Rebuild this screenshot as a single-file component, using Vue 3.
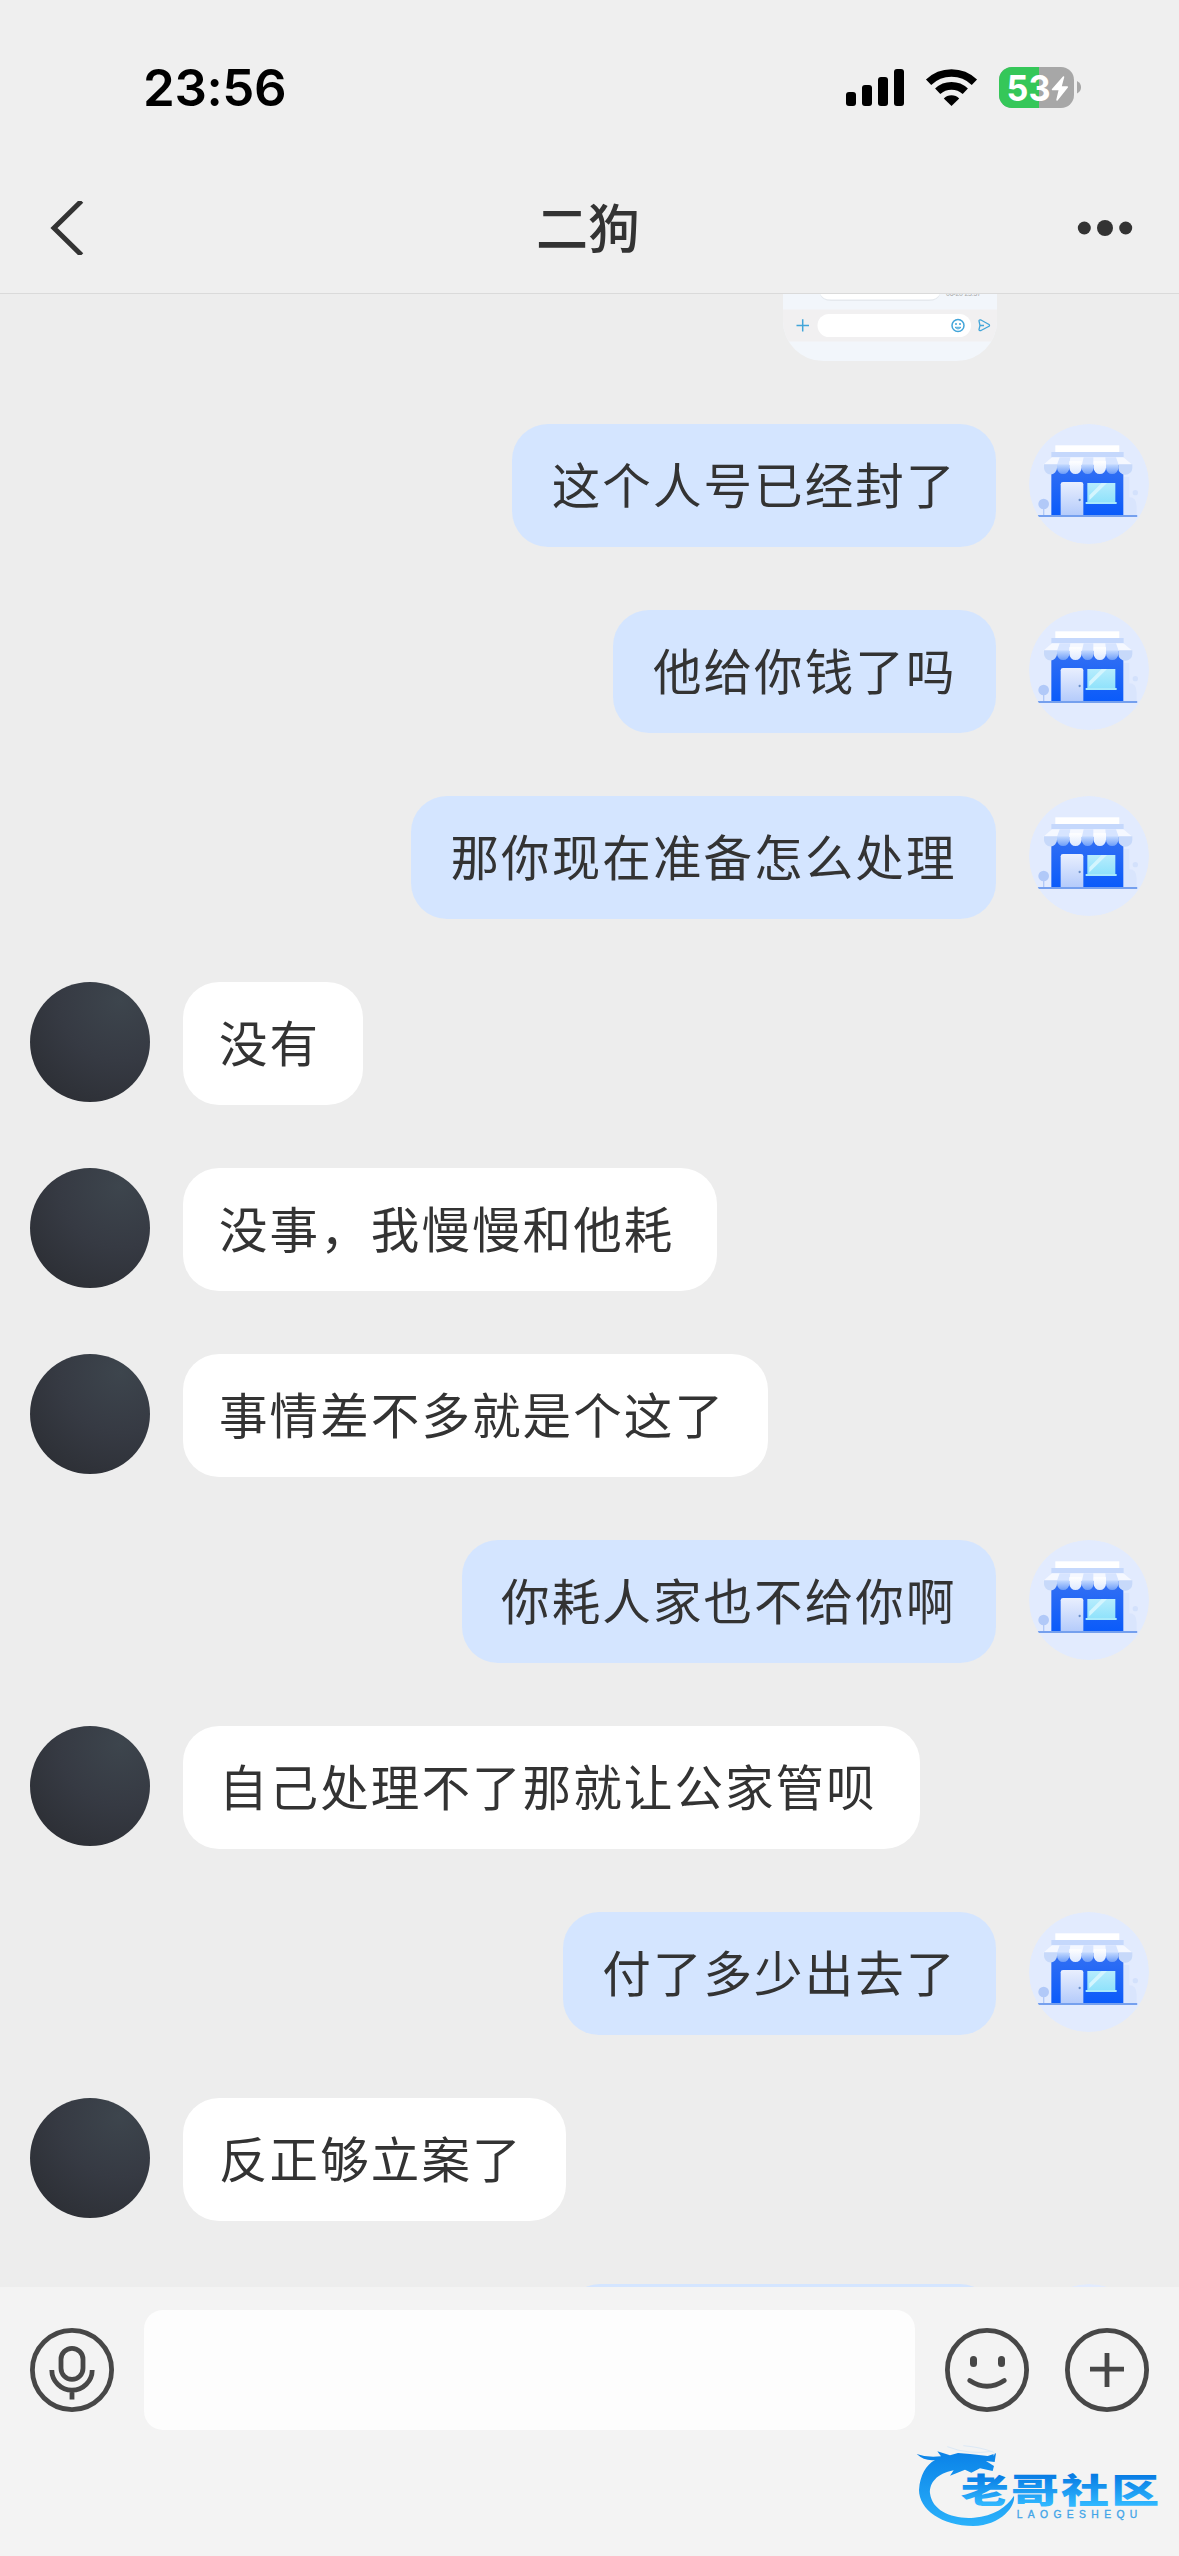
<script setup>
const messages = [
  { me: true, text: '这个人号已经封了' },
  { me: true, text: '他给你钱了吗' },
  { me: true, text: '那你现在准备怎么处理' },
  { me: false, text: '没有' },
  { me: false, text: '没事，我慢慢和他耗' },
  { me: false, text: '事情差不多就是个这了' },
  { me: true, text: '你耗人家也不给你啊' },
  { me: false, text: '自己处理不了那就让公家管呗' },
  { me: true, text: '付了多少出去了' },
  { me: false, text: '反正够立案了' },
  { me: true, text: '', partial: true },
]
</script>

<template>
  <div class="screen">
    <header class="top">
      <div class="status">
        <span class="time">23:56</span>
        <svg class="indicators" width="240" height="44" viewBox="844 66 240 44">
          <rect x="846" y="92" width="10" height="14" rx="3" />
          <rect x="862" y="85" width="10" height="21" rx="3" />
          <rect x="878" y="77" width="10" height="29" rx="3" />
          <rect x="894" y="69" width="10" height="37" rx="3" />
          <g fill="none" stroke="#000" stroke-width="7.6">
            <path d="M928.6 82.2 A33 33 0 0 1 974.4 82.2" />
            <path d="M937.7 91.3 A20.2 20.2 0 0 1 965.3 91.3" />
          </g>
          <path d="M951.5 106 L943.8 98.5 A11 11 0 0 1 959.2 98.5 Z" />
          <rect x="999" y="67" width="75" height="41" rx="13" fill="#a7a7a7" />
          <path d="M1039 67 H1012 A13 13 0 0 0 999 80 V95 A13 13 0 0 0 1012 108 H1039 Z" fill="#35c759" />
          <path d="M1077 81 Q1081 83 1081 87.3 Q1081 91.500 1077 93.500 Z" fill="#a7a7a7" />
          <text x="1006.500" y="100.500" class="battery" textLength="44" lengthAdjust="spacingAndGlyphs">53</text>
          <path d="M1063.500 77 L1052.500 89.500 H1059.500 L1057 100 L1067.300 87 H1060.800 Z" fill="#fff" stroke="#fff" stroke-width="1.500" stroke-linejoin="round" />
        </svg>
      </div>
      <nav class="nav">
        <svg class="back" width="34" height="54" viewBox="0 0 34 54"><path d="M31.500 0 L4 27 L31.500 54" /></svg>
        <h1>二狗</h1>
        <svg class="more" width="56" height="18" viewBox="0 0 56 18">
          <circle cx="7.300" cy="9" r="6.500" /><circle cx="28" cy="9" r="8" /><circle cx="48.700" cy="9" r="6.500" />
        </svg>
      </nav>
    </header>

    <main class="chat">
      <div class="thumb">
        <svg width="214" height="67" viewBox="0 0 214 67">
          <rect width="214" height="67" fill="#f2f6fb" />
          <rect y="15.500" width="214" height="32" fill="#f1f0f1" />
          <path d="M36 -10 H158 V-6 Q158 7 146 7 H48 Q36 7 36 -6Z" fill="#e5e9ee" />
          <path d="M36 -10 H158 V-6 Q158 5.500 146 5.500 H48 Q36 5.500 36 -6Z" fill="#fff" />
          <text x="163" y="2" class="stamp" textLength="35">06-20 23:57</text>
          <rect x="34.500" y="20" width="153.500" height="23" rx="11.500" fill="#fff" />
          <g fill="none" stroke="#42a5d9" stroke-width="1.500">
            <path d="M13.500 31.500 H26 M19.700 25.300 V37.500" />
            <circle cx="175" cy="31.500" r="6" />
            <path d="M172 33.300 Q175 36.500 178 33.300 Z" stroke-width="1" />
            <path d="M173 29 V31 M177 29 V31" />
            <path d="M196 27 Q196 25.500 198 26 L206 30.500 Q207 31.500 206 32.300 L198 36.500 Q196 37 196 35.500 L197 31.500 Z M197 31.500 H201" stroke-width="1.300" />
          </g>
        </svg>
      </div>

      <div v-for="(m, i) in messages" :key="i" class="row" :class="{ me: m.me }">
        <svg v-if="m.me" class="avatar" viewBox="29 42 360 360">
          <defs>
            <linearGradient id="wall" x2="0" y2="1"><stop stop-color="#3470f3" /><stop offset="1" stop-color="#0a5bfa" /></linearGradient>
            <linearGradient id="door" x2="0" y2="1"><stop stop-color="#e9effe" /><stop offset="1" stop-color="#b4cbfb" /></linearGradient>
            <linearGradient id="glass" x2="0" y2="1"><stop stop-color="#b6ecfd" /><stop offset="1" stop-color="#8fe2fb" /></linearGradient>
            <linearGradient id="scallop" x2="0" y2="1"><stop stop-color="#c4daff" /><stop offset="1" stop-color="#6d9df8" /></linearGradient>
            <linearGradient id="pale" x2="0" y2="1"><stop stop-color="#fff" /><stop offset="1" stop-color="#dce8fe" /></linearGradient>
          </defs>
          <circle cx="209" cy="222" r="180" fill="#e2ebfe" />
          <path d="M313 315 V200 H330 V262 Q352 262 352 290 V315 Z" fill="#d9e5fd" />
          <circle cx="348" cy="248" r="8" fill="#d3e1fc" />
          <path d="M96 165 H312 V316 H96 Z" fill="url(#wall)" />
          <rect x="108" y="106" width="192" height="20" fill="#fff" />
          <rect x="96" y="126" width="217" height="16" fill="#c5d8fc" />
          <path d="M98 142 H312 L339 164 H72 Z" fill="#f5f8ff" />
          <path d="M121 142 H153 L150 164 H113Z M193 142 H222 V164 H188Z M258 142 H290 L298 164 H260Z" fill="#d6e4ff" />
          <path d="M74 163 H113 V174 A19 19 0 0 1 74 174Z M297 163 H339 V174 A20 19 0 0 1 297 174Z" fill="#c7d9fa" />
          <path d="M113 163 H150 V173 A18.500 19 0 0 1 113 173Z M187 163 H223 V173 A18 19 0 0 1 187 173Z M260 163 H297 V173 A18.500 19 0 0 1 260 173Z" fill="url(#scallop)" />
          <path d="M150 154 H187 V173 A18.500 19 0 0 1 150 173Z M223 154 H260 V173 A18.500 19 0 0 1 223 173Z" fill="url(#pale)" />
          <path d="M124 316 V223 Q124 216 131 216 H185 Q192 216 192 223 V316 Z" fill="url(#door)" />
          <circle cx="181" cy="270" r="3.500" fill="#6c90c9" />
          <rect x="204" y="219" width="84" height="59" fill="url(#glass)" />
          <path d="M210 256 L247 219 H263 L210 271Z" fill="#d3f5fe" />
          <rect x="199" y="276" width="93" height="6" fill="#a9eafb" />
          <circle cx="73" cy="282" r="16" fill="#b1c9f8" />
          <path d="M71 290 H75 V316 H71Z" fill="#b1c9f8" />
          <rect x="54" y="315" width="300" height="6" rx="2" fill="#75a0ee" />
        </svg>
        <div v-else class="avatar dark"></div>
        <div class="bubble" :class="{ partial: m.partial }">{{ m.text }}</div>
      </div>
    </main>

    <footer class="bar">
      <div class="controls">
        <svg class="round" viewBox="-42 -42 84 84">
          <circle r="39.600" /><rect x="-11" y="-21.700" width="22" height="31" rx="11" />
          <path d="M-20.200 0 A20.200 20.200 0 0 0 20.200 0 M0 20 V29.500" />
        </svg>
        <div class="input"></div>
        <svg class="round smile" viewBox="-42 -42 84 84">
          <circle r="39.600" /><path d="M-17.300 10.500 Q0 22 17.300 10.500" stroke-linecap="round" />
          <path class="eyes" d="M-13.500 -10.500 V-6.500 M14.500 -10.500 V-6.500" />
        </svg>
        <svg class="round" viewBox="-42 -42 84 84">
          <circle r="39.600" /><path d="M-17 -0.800 H17 M0 -17 V17" />
        </svg>
      </div>
      <svg class="brand" width="279" height="126" viewBox="0 0 837 378">
        <defs>
          <linearGradient id="ring" gradientUnits="userSpaceOnUse" x1="0" y1="70" x2="0" y2="290"><stop stop-color="#0b83e8" /><stop offset="1" stop-color="#2bb2fb" /></linearGradient>
          <linearGradient id="ink" gradientUnits="userSpaceOnUse" x1="0" y1="-114" x2="0" y2="10"><stop stop-color="#087ce4" /><stop offset="1" stop-color="#30b8ff" /></linearGradient>
        </defs>
        <path d="M50 72 Q82 84 123 79 L112 64 L150 76 L174 69 L210 72 L263 78 L288 70 L284 96 L258 93 L282 108 L278 123 L240 115 L214 128 L195 119 L150 137 L161 121 C110 130 88 160 90 190 C97 245 160 268 222 263 C282 258 320 231 342 197 C347 228 305 285 220 288 C125 288 57 238 57 180 C60 135 78 105 105 90 Q74 94 50 72Z" fill="url(#ring)" />
        <path d="M142 50 Q205 75 278 64 Q287 70 281 76 M190 47 Q245 52 278 66" fill="none" stroke="#dce9f6" stroke-width="3" />
        <text class="brand-name" transform="translate(182 218) scale(1 .72)" textLength="596" fill="url(#ink)">老哥社区</text>
        <text class="brand-sub" x="350" y="264" textLength="362">LAOGESHEQU</text>
      </svg>
    </footer>
  </div>
</template>

<style>
body { margin: 0; background: #ededed; }
</style>

<style scoped>
.screen {
  width: 1179px; height: 2556px; display: flex; flex-direction: column; overflow: hidden;
  background: #ededed; color: #333;
  font-family: "Noto Sans CJK SC", "Noto Sans", sans-serif;
}
.top { height: 293px; flex: none; background: #efefef; border-bottom: 1px solid #dadada; }
.status { height: 163px; display: flex; align-items: flex-start; justify-content: space-between; }
.time {
  margin: 58px 0 0 143px; font: 600 51px/60px Inter, sans-serif; letter-spacing: -0.400px; color: #000;
}
.indicators { margin: 66px 95px 0 0; }
.battery { font: 700 36px Inter, sans-serif; fill: #fff; }
.nav { height: 130px; display: flex; align-items: center; justify-content: space-between; padding: 0 46px 0 50px; }
.back path { fill: none; stroke: #333; stroke-width: 5; }
.nav h1 { margin: 0 0 5px 15px; font-size: 52px; line-height: 76px; font-weight: 500; }
.more { fill: #333; }
.chat {
  height: 1993px; flex: none; overflow: hidden; display: flex; flex-direction: column; gap: 63px;
}
.thumb { align-self: flex-end; flex: none; width: 214px; height: 67px; margin-right: 182px; border-radius: 0 0 40px 40px; overflow: hidden; }
.thumb svg { display: block; }
.stamp { font: 7px "Liberation Sans", sans-serif; fill: #aaa; }
.row { height: 123px; flex: none; display: flex; gap: 33px; padding: 0 30px; }
.row.me { flex-direction: row-reverse; }
.avatar { width: 120px; height: 120px; flex: none; border-radius: 50%; }
.dark { background: radial-gradient(circle at 75% 15%, #3d454d 0%, #363a43 45%, #292b30 100%); }
.bubble {
  height: 123px; box-sizing: border-box; padding: 0 43px 0 36px; border-radius: 36px; background: #fff;
  font-size: 48.500px; line-height: 118px; letter-spacing: 2.100px; white-space: nowrap;
}
.me .bubble { background: #d4e5ff; padding: 0 39.500px 0 39.500px; }
.me .bubble.partial { width: 432px; }
.bar { flex: 1; background: #f3f3f3; display: flex; flex-direction: column; }
.controls { display: flex; align-items: center; height: 120px; padding: 23px 30px 0; }
.round { width: 84px; height: 84px; flex: none; fill: none; stroke: #474747; stroke-width: 4.800px; }
.eyes { stroke-width: 7px; stroke-linecap: round; }
.input { width: 771px; height: 120px; margin-left: 30px; border-radius: 19px; background: #fdfdfd; }
.smile { margin: 0 36px 0 30px; }
.brand { align-self: flex-end; flex: none; }
.brand-name { font-size: 144px; font-weight: 900; }
.brand-sub { font: 400 31px "Liberation Sans", sans-serif; fill: #42a5e8; stroke: #42a5e8; stroke-width: 1px; }
</style>
